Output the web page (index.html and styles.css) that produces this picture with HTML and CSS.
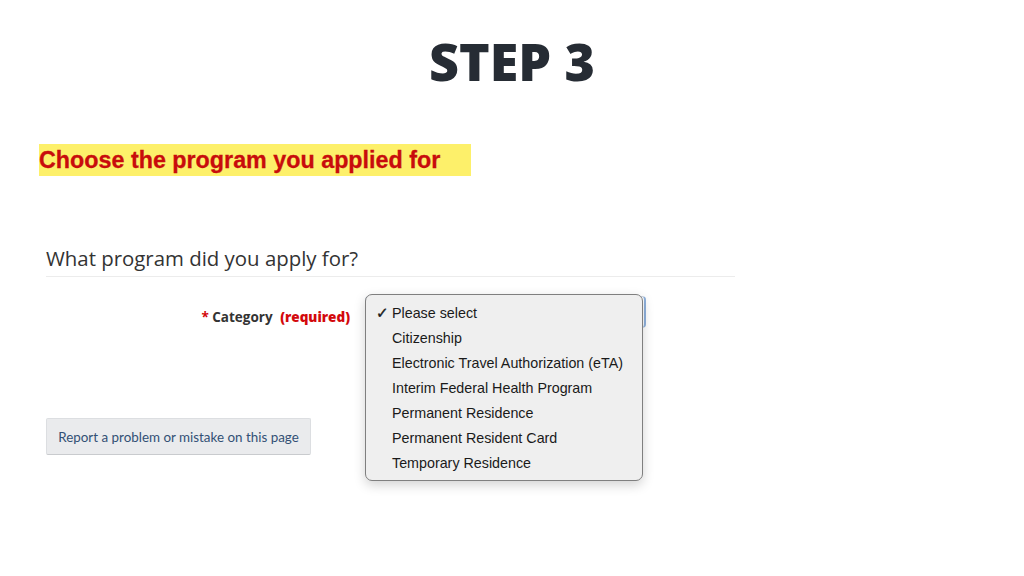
FILE: index.html
```html
<!DOCTYPE html>
<html>

<head>
    <title>Step 3</title>
    <link rel="stylesheet" href="styles.css">
</head>

<body>
    <h1 class="step-title">STEP 3</h1>

    <div class="highlight">
        <span>Choose the program you applied for</span>
    </div>

    <div class="form-section">
        <h2 class="section-title">What program did you apply for?</h2>

        <div class="form-row">
            <label class="field-label" for="category">
                <span class="req-star">*</span> Category <strong class="req">(required)</strong>
            </label>
            <div class="select-wrap">
                <div class="select-box" id="category"></div>
                <ul class="dropdown">
                    <li class="checked"><span class="tick">&#10003;</span>Please select</li>
                    <li>Citizenship</li>
                    <li>Electronic Travel Authorization (eTA)</li>
                    <li>Interim Federal Health Program</li>
                    <li>Permanent Residence</li>
                    <li>Permanent Resident Card</li>
                    <li>Temporary Residence</li>
                </ul>
            </div>
        </div>

        <button class="report-btn">Report a problem or mistake on this page</button>
    </div>
</body>

</html>
```

FILE: styles.css
```css
html,
body {
    min-height: 576px;
}

body {
    background-color: #ffffff;
    font-family: "Noto Sans", sans-serif;
    margin: 0;
    padding: 0;
}

.step-title {
    margin: 29px 0 0;
    text-align: center;
    font-family: "Open Sans", sans-serif;
    font-weight: 800;
    font-size: 52px;
    line-height: 64px;
    color: #262c34;
}

.highlight {
    margin: 51px 0 0 39px;
    width: 432px;
    height: 32px;
    background-color: #fdf06a;
    display: flex;
    align-items: center;
}

.highlight span {
    font-family: "Liberation Sans", Arial, sans-serif;
    font-weight: bold;
    font-size: 23.3px;
    color: #c80c0c;
    -webkit-text-stroke: 0.3px #c80c0c;
}

.form-section {
    margin: 68px 0 0 46px;
    width: 689px;
}

.section-title {
    margin: 0;
    padding-bottom: 4px;
    font-family: "Open Sans", sans-serif;
    font-weight: normal;
    font-size: 20.4px;
    line-height: 28px;
    color: #333333;
    border-bottom: 1px solid #ececec;
}

.form-row {
    display: flex;
    align-items: flex-start;
    margin-top: 18px;
    height: 123px;
}

.field-label {
    width: 304px;
    text-align: right;
    padding-top: 13px;
    font-family: "Open Sans", sans-serif;
    font-weight: bold;
    font-size: 13.5px;
    color: #333333;
}

.req-star {
    color: #d3080c;
}

.req {
    color: #d3080c;
    margin-left: 4px;
}

.select-wrap {
    position: relative;
    margin-left: 15px;
}

.select-box {
    width: 278px;
    height: 30px;
    margin-top: 1px;
    border: 1px solid #c9d3e0;
    border-right: 2px solid #8fb1dc;
    border-radius: 4px;
}

.dropdown {
    position: absolute;
    z-index: 10;
    top: -1px;
    left: 0;
    width: 276px;
    margin: 0;
    padding: 6px 0 4px;
    list-style: none;
    background-color: #efefef;
    border: 1px solid #7f7f7f;
    border-radius: 7px;
    box-shadow: 0 4px 12px rgba(0, 0, 0, 0.18);
    font-family: "Liberation Sans", Arial, sans-serif;
    font-size: 14.3px;
    color: #1a1a1a;
}

.dropdown li {
    position: relative;
    height: 25px;
    line-height: 25px;
    padding-left: 26px;
}

.dropdown .tick {
    position: absolute;
    left: 10px;
    font-family: "DejaVu Sans", sans-serif;
    font-weight: bold;
    font-size: 15px;
    -webkit-text-stroke: 0.4px #1a1a1a;
}

.report-btn {
    display: block;
    margin-top: 0;
    width: 265px;
    height: 37px;
    padding: 0;
    background-color: #eaebed;
    border: 1px solid #dcdee1;
    border-bottom-color: #c9cbce;
    border-radius: 2px;
    font-family: Lato, sans-serif;
    font-size: 13.4px;
    color: #335075;
    cursor: pointer;
}
```
